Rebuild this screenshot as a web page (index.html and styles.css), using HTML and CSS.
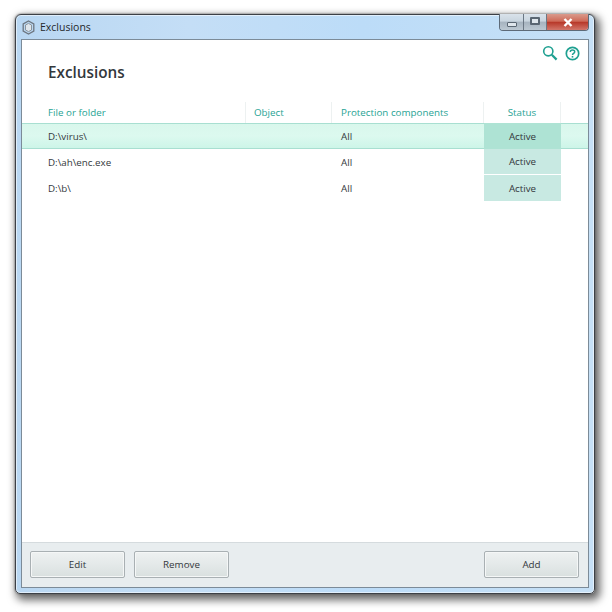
FILE: index.html
```html
<!DOCTYPE html>
<html lang="en">
<head>
<meta charset="utf-8">
<title>Exclusions</title>
<link rel="stylesheet" href="styles.css">
</head>
<body>
<div class="window">
  <div class="titlebar">
    <svg class="app-icon" width="13" height="15" viewBox="0 0 13 15"><path d="M6.5 1 L11.8 4 V11 L6.5 14 L1.2 11 V4 Z" fill="none" stroke="#6d7680" stroke-width="1.3"/><path d="M6.5 3.4 L9.5 5 V10 L6.5 11.6 L3.5 10 V5 Z" fill="#dfe6ec" stroke="#8b949c" stroke-width="1"/></svg>
    <span class="title-text">Exclusions</span>
    <div class="controls">
      <div class="ctl ctl-min"><span class="min-glyph"></span></div>
      <div class="ctl ctl-max"><span class="max-glyph"></span></div>
      <div class="ctl ctl-close"><svg width="10" height="9" viewBox="0 0 10 9"><path d="M1.5 1 L8.5 8 M8.5 1 L1.5 8" stroke="#fff" stroke-width="2.4"/></svg></div>
    </div>
  </div>
  <div class="client">
    <div class="tools">
      <svg width="16" height="16" viewBox="0 0 16 16"><circle cx="6.3" cy="6.3" r="4.6" fill="none" stroke="#1fa091" stroke-width="1.6"/><path d="M9.8 9.8 L14.6 14.6" stroke="#1fa091" stroke-width="2.2"/></svg>
      <svg width="15" height="15" viewBox="0 0 15 15"><circle cx="7.5" cy="7.5" r="6.2" fill="none" stroke="#1fa091" stroke-width="1.7"/><path d="M5.3 5.9 C5.3 3.4 9.7 3.4 9.7 5.8 C9.7 7.4 7.5 7.3 7.5 9" fill="none" stroke="#1fa091" stroke-width="1.5"/><rect x="6.7" y="10" width="1.6" height="1.6" fill="#1fa091"/></svg>
    </div>
    <h1 class="heading">Exclusions</h1>
    <div class="table">
      <div class="row head">
        <div class="cell c1">File or folder</div>
        <div class="cell c2">Object</div>
        <div class="cell c3">Protection components</div>
        <div class="cell c4">Status</div>
      </div>
      <div class="row selected">
        <div class="cell c1">D:\virus\</div>
        <div class="cell c2"></div>
        <div class="cell c3">All</div>
        <div class="cell c4">Active</div>
      </div>
      <div class="row">
        <div class="cell c1">D:\ah\enc.exe</div>
        <div class="cell c2"></div>
        <div class="cell c3">All</div>
        <div class="cell c4">Active</div>
      </div>
      <div class="row">
        <div class="cell c1">D:\b\</div>
        <div class="cell c2"></div>
        <div class="cell c3">All</div>
        <div class="cell c4">Active</div>
      </div>
    </div>
    <div class="footer">
      <button class="btn">Edit</button>
      <button class="btn">Remove</button>
      <button class="btn btn-add">Add</button>
    </div>
  </div>
</div>
</body>
</html>
```

FILE: styles.css
```css
* { box-sizing: border-box; }
html, body { margin: 0; height: 612px; background: #fff; overflow: hidden; }
body { padding: 14px 17px 18px 15px; font-family: "Open Sans", "Noto Sans", sans-serif; font-size: 9.8px; color: #33383c; }

.window {
  width: 580px; height: 580px; display: flex; flex-direction: column;
  border: 1px solid #3c4046; border-radius: 6px 6px 5px 5px;
  background: linear-gradient(90deg, #b9d7f2 0%, #c4def6 30%, #bcdcf8 60%, #c6e0f6 100%);
  padding: 0 5px 5px;
  box-shadow: 0 0 2px #555, 3px 4px 9px 2px rgba(0,0,0,.6), inset 0 0 0 1px rgba(255,255,255,.55);
}
.titlebar { height: 24px; flex: none; display: flex; align-items: center; position: relative; }
.app-icon { margin: 1px 0 0 1px; }
.title-text { margin-left: 5px; font-size: 10.5px; color: #26282b; }
.controls { position: absolute; top: -1px; right: 0; display: flex; height: 17px; border: 1px solid #5d6a78; border-top: none; border-radius: 0 0 4px 4px; overflow: hidden; }
.ctl { display: flex; align-items: center; justify-content: center; height: 100%; }
.ctl-min { width: 24px; background: linear-gradient(#d9e2ea 0, #c9d5df 45%, #a6b3bf 50%, #bcc8d2 100%); border-right: 1px solid #6b7784; }
.ctl-max { width: 23px; background: linear-gradient(#d9e2ea 0, #c9d5df 45%, #a6b3bf 50%, #bcc8d2 100%); border-right: 1px solid #6b7784; }
.ctl-close { width: 41px; background: linear-gradient(#d99a8c 0, #cf6a58 45%, #b8392a 52%, #d2766a 100%); }
.min-glyph { width: 10px; height: 5px; margin-top: 5px; background: #dfe6ec; border: 1px solid #5a6672; border-radius: 1px; }
.max-glyph { width: 10px; height: 8px; background: #dfe6ec; border: 2px solid #5a6672; border-radius: 1px; margin-bottom: 2px; }

.client { flex: 1; background: #fff; border: 1px solid #7c8b98; display: flex; flex-direction: column; position: relative; min-height: 0; }
.tools { position: absolute; top: 5px; right: 8px; display: flex; align-items: center; gap: 7px; }
.heading { margin: 21px 0 0 26px; font-size: 15.3px; line-height: 22px; font-weight: 600; color: #33383c; }

.table { margin-top: 19px; flex: 1; }
.row { display: flex; height: 26px; align-items: stretch; }
.cell { display: flex; align-items: center; }
.c1 { width: 224px; padding-left: 26px; }
.c2 { width: 86px; padding-left: 8px; }
.c3 { width: 152px; padding-left: 9px; }
.c4 { width: 77px; justify-content: center; background: #c8e9e2; margin-bottom: 1px; }
.row:last-child .c4 { margin-bottom: 0; }
.head { height: 21px; color: #1fa394; }
.head .cell { background: transparent; margin: 0; align-items: flex-start; padding-top: 4px; line-height: 14px; border-right: 1px solid #edf1f1; }
.selected { background: linear-gradient(#d9f7ec, #dcf9ef 50%, #cdf5e8); border-top: 1px solid #a8dfd1; border-bottom: 1px solid #a8dfd1; }
.selected .cell { padding-top: 1px; }
.selected .c4 { background: #aee3d4; margin: -1px 0; height: 26px; }

.footer { flex: none; height: 45px; background: #e8edef; border-top: 1px solid #d5dbde; display: flex; align-items: flex-start; padding: 8px 9px 0 8px; gap: 9px; }
.btn { width: 95px; height: 27px; padding: 0; font: inherit; color: #33383c; background: linear-gradient(#eef1f1, #e4e9e9 50%, #d9e0df); border: 1px solid #a9b0b3; border-radius: 2px; box-shadow: inset 0 0 0 1px #f5f7f7; }
.btn-add { margin-left: auto; }
```
